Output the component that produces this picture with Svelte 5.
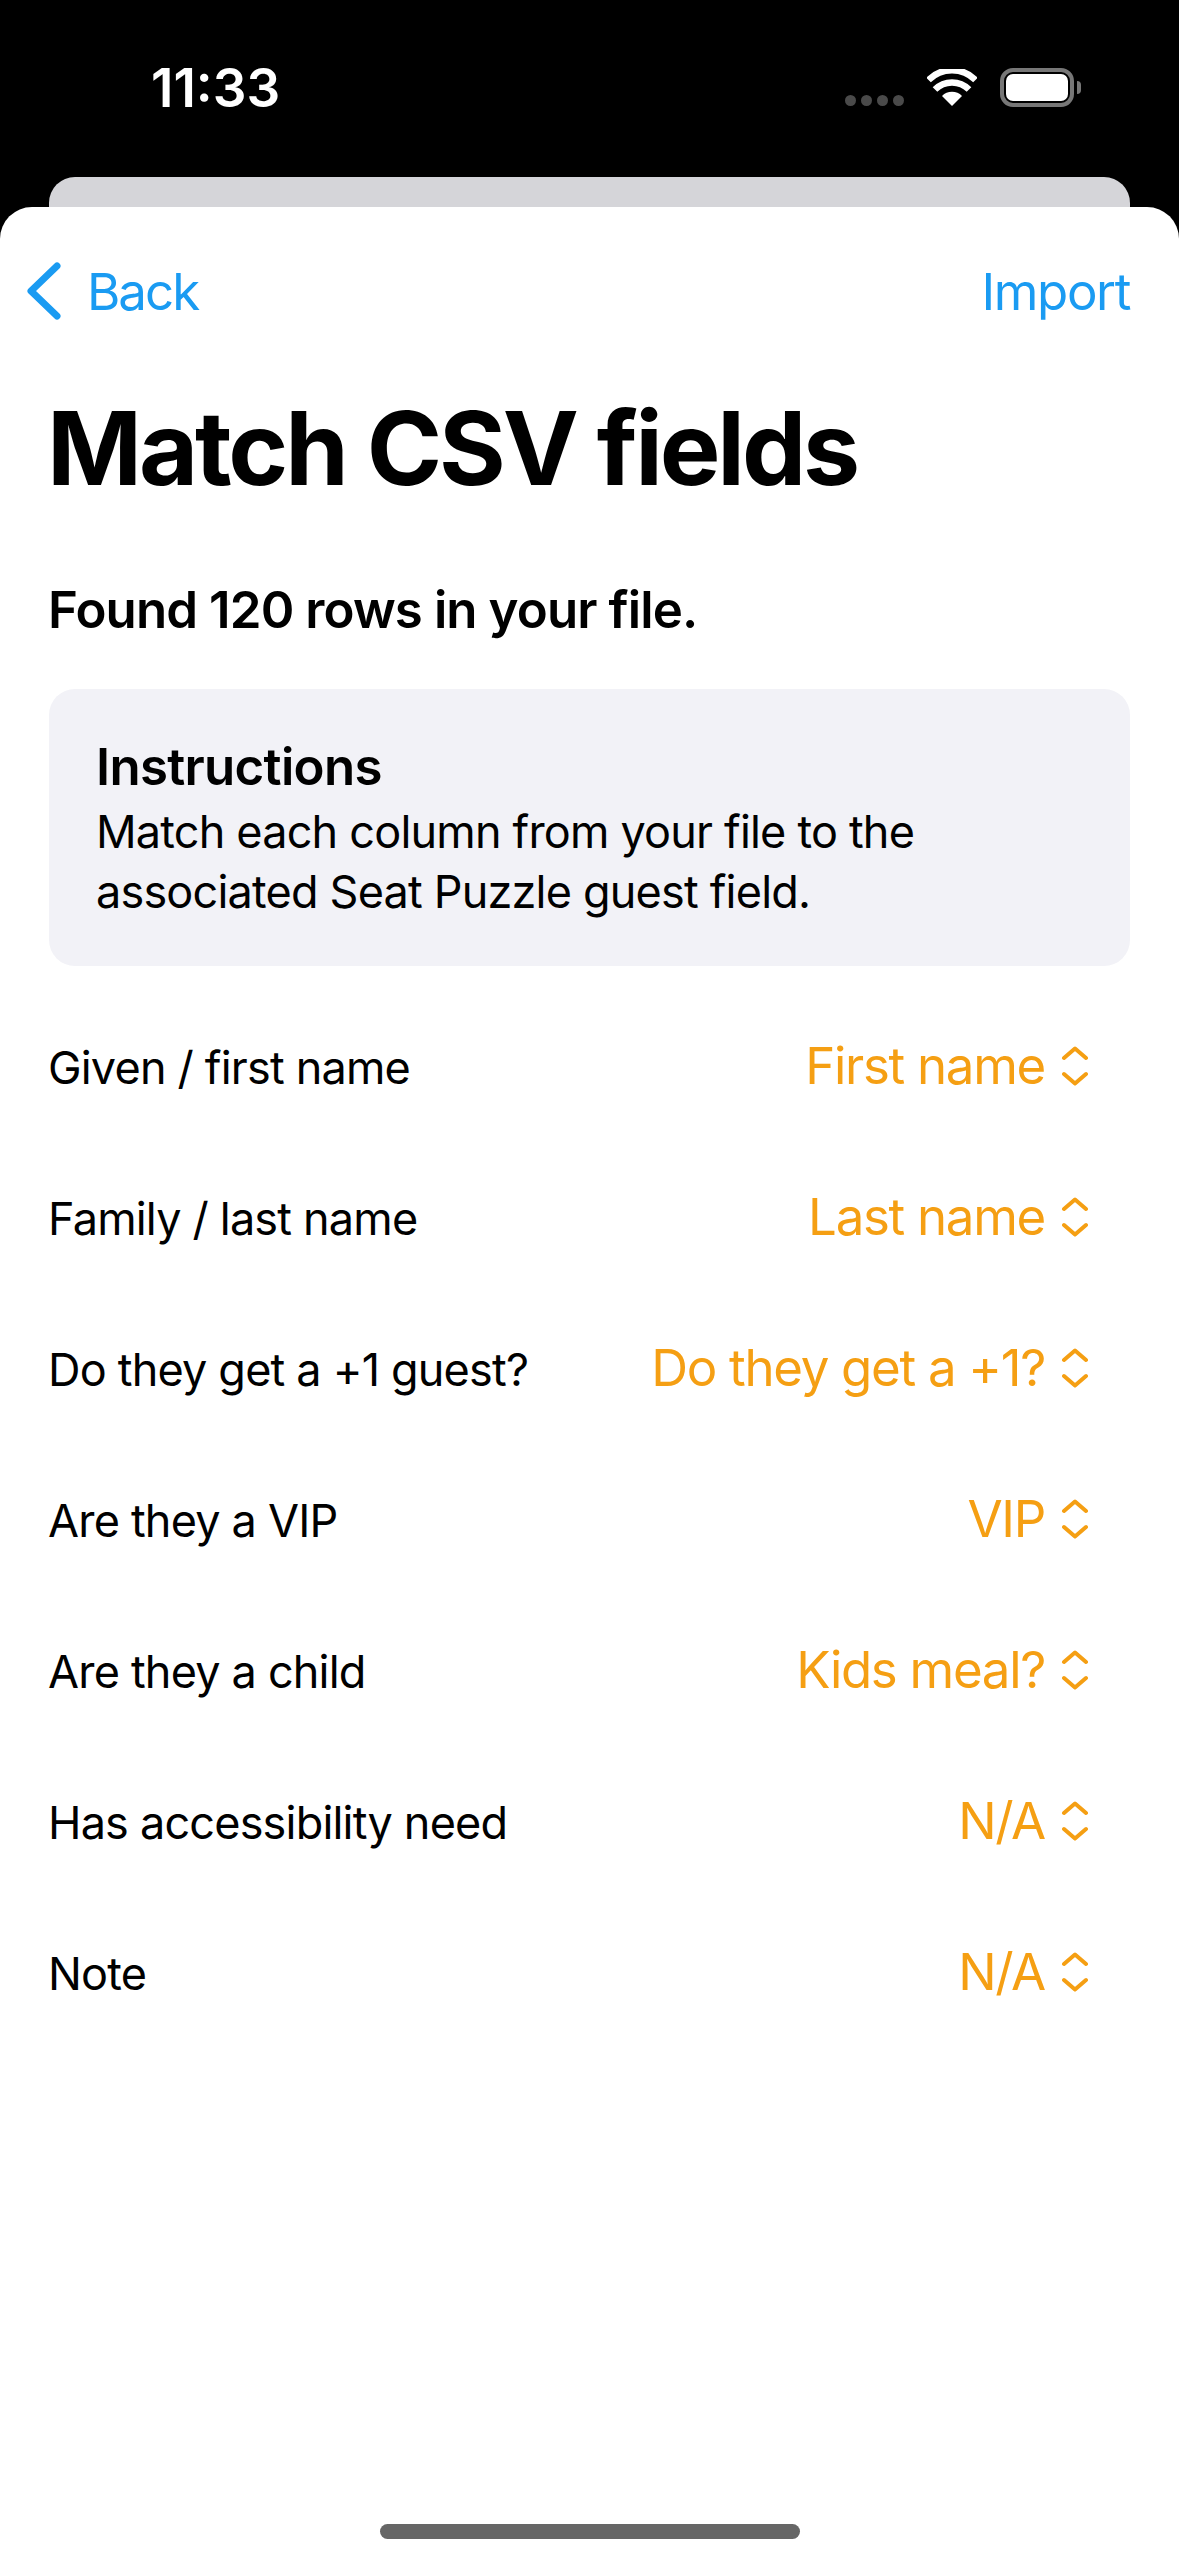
<script>
  const rows = [
    { label: "Given / first name", value: "First name" },
    { label: "Family / last name", value: "Last name" },
    { label: "Do they get a +1 guest?", value: "Do they get a +1?" },
    { label: "Are they a VIP", value: "VIP" },
    { label: "Are they a child", value: "Kids meal?" },
    { label: "Has accessibility need", value: "N/A" },
    { label: "Note", value: "N/A" }
  ];
</script>

<div class="screen">
  <header class="status">
    <span class="time">11:33</span>
    <div class="status-icons">
      <div class="dots"><i></i><i></i><i></i><i></i></div>
      <svg class="wifi" width="50" height="38" viewBox="0 0 50 38">
        <path d="M25 37 L15 27 A14 14 0 0 1 35 27 Z" fill="#fff" />
        <path d="M8 20.500 A24 24 0 0 1 42 20.500" fill="none" stroke="#fff" stroke-width="6.5" />
        <path d="M1.500 11 A33 33 0 0 1 48.500 11" fill="none" stroke="#fff" stroke-width="6.5" />
      </svg>
      <div class="battery"><div class="battery-fill"></div></div>
      <div class="battery-cap"></div>
    </div>
  </header>

  <div class="peek"></div>

  <main class="sheet">
    <nav class="nav">
      <div class="back">
        <svg width="36" height="60" viewBox="0 0 36 60">
          <path d="M31 5 L5 30 L31 55" fill="none" stroke="#1a9bf2" stroke-width="7" stroke-linecap="round" stroke-linejoin="round" />
        </svg>
        <span>Back</span>
      </div>
      <span class="import">Import</span>
    </nav>

    <h1>Match CSV fields</h1>
    <p class="found">Found 120 rows in your file.</p>

    <section class="instructions">
      <h2>Instructions</h2>
      <p>Match each column from your file to the<br />associated Seat Puzzle guest field.</p>
    </section>

    <div class="rows">
      {#each rows as row}
        <div class="row">
          <span class="label">{row.label}</span>
          <div class="picker">
            <span>{row.value}</span>
            <svg width="30" height="40" viewBox="0 0 30 40">
              <path d="M4 12 L15 2.500 L26 12 M4 28 L15 37.500 L26 28" fill="none" stroke="#f59f13" stroke-width="4" stroke-linecap="round" stroke-linejoin="round" />
            </svg>
          </div>
        </div>
      {/each}
    </div>

    <div class="home"></div>
  </main>
</div>

<style>
  :global(body) {
    margin: 0;
    background: #000;
  }
  .screen {
    width: 1179px;
    height: 2556px;
    display: flex;
    flex-direction: column;
    background: #000;
    overflow: hidden;
    font-family: Inter, "Liberation Sans", sans-serif;
    color: #000;
  }
  .status {
    height: 177px;
    flex: none;
    display: flex;
    justify-content: space-between;
    align-items: flex-start;
    padding: 0 98px 0 151px;
    box-sizing: border-box;
    color: #fff;
  }
  .time {
    font-size: 53px;
    font-weight: 600;
    line-height: 62px;
    margin-top: 57px;
  }
  .status-icons {
    display: flex;
    align-items: center;
    margin-top: 68px;
    height: 39px;
  }
  .dots {
    display: flex;
    gap: 5px;
    margin: 26px 23px 0 0;
  }
  .dots i {
    width: 11px;
    height: 11px;
    border-radius: 50%;
    background: #4a4a4a;
  }
  .wifi {
    margin-right: 23px;
  }
  .battery {
    width: 74px;
    height: 39px;
    box-sizing: border-box;
    border: 4px solid #777;
    border-radius: 13px;
    padding: 2px;
  }
  .battery-fill {
    width: 100%;
    height: 100%;
    background: #fff;
    border-radius: 7px;
  }
  .battery-cap {
    width: 4px;
    height: 13px;
    margin-left: 3px;
    background: #777;
    border-radius: 0 6px 6px 0;
  }
  .peek {
    flex: none;
    height: 30px;
    margin: 0 49px;
    background: #d5d5d9;
    border-radius: 26px 26px 0 0;
  }
  .sheet {
    flex: 1;
    display: flex;
    flex-direction: column;
    background: #fff;
    border-radius: 32px 32px 0 0;
    padding: 0 49px;
    position: relative;
  }
  .nav {
    display: flex;
    justify-content: space-between;
    align-items: center;
    height: 62px;
    margin: 53px 0 0 -23px;
    color: #1a9bf2;
    font-size: 51px;
    letter-spacing: -1.4px;
  }
  .back {
    display: flex;
    align-items: center;
    gap: 25px;
  }
  .back span {
    letter-spacing: -2px;
  }
  h1 {
    margin: 64px 0 0 -2px;
    font-size: 102px;
    font-weight: 700;
    line-height: 124px;
    letter-spacing: -3.1px;
  }
  .found {
    margin: 69px 0 0 -1px;
    font-size: 51px;
    font-weight: 600;
    line-height: 62px;
    letter-spacing: -0.9px;
  }
  .instructions {
    margin-top: 48px;
    height: 277px;
    box-sizing: border-box;
    padding: 48px 48px 0;
    background: #f2f2f7;
    border-radius: 26px;
  }
  h2 {
    margin: 0 0 0 -1px;
    font-size: 51px;
    font-weight: 600;
    line-height: 60px;
    letter-spacing: -0.7px;
  }
  .instructions p {
    margin: 5px 0 0 -1px;
    font-size: 45px;
    line-height: 60px;
    letter-spacing: -0.8px;
  }
  .rows {
    display: flex;
    flex-direction: column;
    margin-top: 26px;
  }
  .row {
    height: 151px;
    display: flex;
    justify-content: space-between;
    align-items: center;
    padding-right: 40px;
  }
  .label {
    margin-left: -1px;
    font-size: 45px;
    letter-spacing: -0.8px;
  }
  .picker {
    display: flex;
    align-items: center;
    gap: 15px;
    color: #f59f13;
    font-size: 51px;
    letter-spacing: -1.3px;
    margin-top: -4px;
  }
  .home {
    position: absolute;
    left: 380px;
    bottom: 17px;
    width: 420px;
    height: 15px;
    border-radius: 8px;
    background: #666;
  }
</style>
